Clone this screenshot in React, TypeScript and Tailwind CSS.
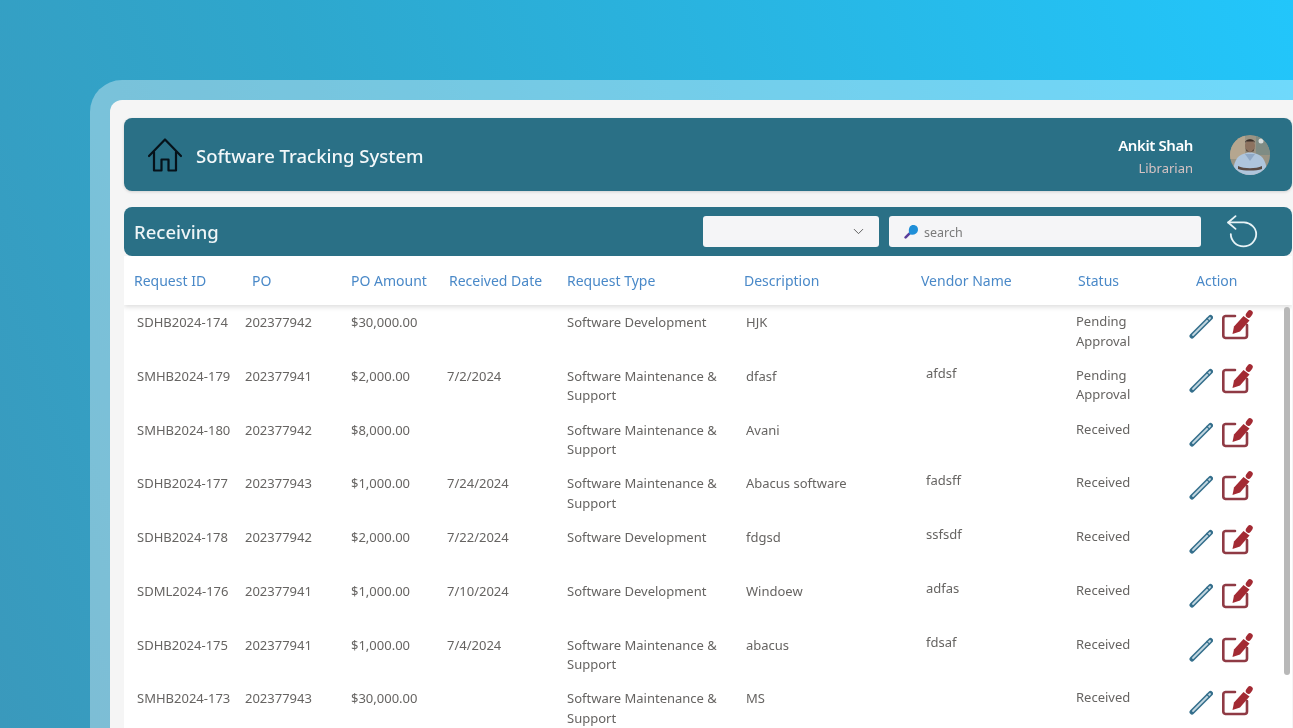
import React from "react";
import { ChevronDown } from "lucide-react";

const font = "font-['Noto_Sans','Open_Sans',sans-serif]";
const cols = "grid grid-cols-[108px_106px_96px_122px_179px_180px_156px_111px_1fr]";

type Row = { id: string; po: string; amt: string; date: string; type: string; desc: string; vendor: string; status: string };
const rows: Row[] = [
  { id: "SDHB2024-174", po: "202377942", amt: "$30,000.00", date: "", type: "Software Development", desc: "HJK", vendor: "", status: "Pending Approval" },
  { id: "SMHB2024-179", po: "202377941", amt: "$2,000.00", date: "7/2/2024", type: "Software Maintenance & Support", desc: "dfasf", vendor: "afdsf", status: "Pending Approval" },
  { id: "SMHB2024-180", po: "202377942", amt: "$8,000.00", date: "", type: "Software Maintenance & Support", desc: "Avani", vendor: "", status: "Received" },
  { id: "SDHB2024-177", po: "202377943", amt: "$1,000.00", date: "7/24/2024", type: "Software Maintenance & Support", desc: "Abacus software", vendor: "fadsff", status: "Received" },
  { id: "SDHB2024-178", po: "202377942", amt: "$2,000.00", date: "7/22/2024", type: "Software Development", desc: "fdgsd", vendor: "ssfsdf", status: "Received" },
  { id: "SDML2024-176", po: "202377941", amt: "$1,000.00", date: "7/10/2024", type: "Software Development", desc: "Windoew", vendor: "adfas", status: "Received" },
  { id: "SDHB2024-175", po: "202377941", amt: "$1,000.00", date: "7/4/2024", type: "Software Maintenance & Support", desc: "abacus", vendor: "fdsaf", status: "Received" },
  { id: "SMHB2024-173", po: "202377943", amt: "$30,000.00", date: "", type: "Software Maintenance & Support", desc: "MS", vendor: "", status: "Received" },
];

const heads: [string, string][] = [
  ["Request ID", "pl-[10px]"],
  ["PO", "pl-[20px]"],
  ["PO Amount", "pl-[13px]"],
  ["Received Date", "pl-[15px]"],
  ["Request Type", "pl-[11px]"],
  ["Description", "pl-[9px]"],
  ["Vendor Name", "pl-[6px]"],
  ["Status", "pl-[7px]"],
  ["Action", "pl-[14px]"],
];

function HomeIcon() {
  return (
    <svg width="36" height="36" viewBox="0 0 36 36" fill="none" stroke="#06121a" strokeWidth="2.2" strokeLinejoin="round" strokeLinecap="round">
      <path d="M2 19 18 2.500 34 19" />
      <path d="M7 15v18.500h7.500V22.500h7v11H29V15" />
    </svg>
  );
}

function UndoIcon() {
  return (
    <svg width="35" height="36" viewBox="0 0 33 34" fill="none" stroke="#e8f3f6" strokeWidth="1.7" strokeLinecap="round" strokeLinejoin="round">
      <path d="M9 2 2 8l7 6" />
      <path d="M2 8h15c6.500 .4 11.500 5 11.500 11 0 6.500-5.500 11.500-12 11.500S4.500 25.500 4.500 19" />
    </svg>
  );
}

function KeyIcon() {
  return (
    <svg width="15" height="15" viewBox="0 0 14 14">
      <path d="M5 9 1.500 12.500" stroke="#5b3f9c" strokeWidth="2.400" strokeLinecap="round" />
      <path d="M8.500 1C11.500 1 13.500 3 13 6c-.4 2.400-2.500 4-5.500 4C5.500 10 4.500 9 4.500 6.500 4.500 3 6 1 8.500 1Z" fill="#1f8fd8" />
    </svg>
  );
}

function PencilIcon() {
  return (
    <svg width="24" height="25" viewBox="0 0 24 25" fill="none" strokeLinecap="round">
      <path d="M3 22 21.500 3.500" stroke="#356f8c" strokeWidth="5" />
      <path d="M4 21 21 4" stroke="#c4d8e2" strokeWidth="1.800" />
      <path d="M17.800 4.500 20.500 7.200" stroke="#356f8c" strokeWidth="1.200" />
    </svg>
  );
}

function EditIcon() {
  return (
    <svg width="31" height="31" viewBox="0 0 31 31" fill="none">
      <path d="M13 6H3.500A2.500 2.500 0 0 0 1.300 8.500v17A2.500 2.500 0 0 0 3.500 28h19a2.500 2.500 0 0 0 2.500-2.500V15" stroke="#8f3a44" strokeWidth="2.600" strokeLinecap="round" />
      <path d="M10.500 24 12 16.500 21.500 6l6 4.500L18 21.500Z" fill="#a32a33" />
      <path d="M26.500 5 28 3" stroke="#a32a33" strokeWidth="5.500" strokeLinecap="round" />
    </svg>
  );
}

function Avatar() {
  return (
    <svg width="40" height="40" viewBox="0 0 40 40" className="rounded-full blur-[0.6px]">
      <rect width="40" height="40" fill="#9a9484" />
      <rect x="0" y="0" width="15" height="24" fill="#b5a68f" />
      <rect x="26" y="0" width="14" height="20" fill="#7f8c84" />
      <circle cx="31" cy="6" r="2.500" fill="#d8dedd" />
      <path d="M3 40c0-13 4-19 10-21l7-2 7 2c6 2 10 8 10 21Z" fill="#aec5dc" />
      <path d="M15 19 20 26l5-7" fill="#8fa9c6" />
      <ellipse cx="20" cy="11" rx="5" ry="6.500" fill="#8d7360" />
      <path d="M15 8c0-5 10-5 10 0l-1-1.500h-8Z" fill="#3a2f28" />
      <path d="M15.500 13c2 4.500 7 4.500 9 0l-1 3.500h-7Z" fill="#54453a" />
      <path d="M8 31c6 3 18 3 24 0v3c-6 2-18 2-24 0Z" fill="#5a4a42" />
    </svg>
  );
}

export default function App() {
  return (
    <div className={`${font} h-[728px] w-[1293px] overflow-hidden bg-[linear-gradient(70deg,#3a99bc_0%,#2ea7cd_35%,#22c6fb_100%)] pl-[90px] pt-[80px] blur-[0.35px]`}>
      <div className="h-full rounded-tl-[32px] bg-white/35 pl-[20px] pt-[20px]">
        <div className="relative h-full rounded-tl-[12px] bg-[#f5f5f5] pl-[14px] pr-px pt-[18px]">
          <header className="flex h-[73px] items-center rounded-lg bg-[#2a7086] pl-[23px] pr-[22px] shadow-[0_1px_3px_rgba(0,0,0,0.15)]">
            <HomeIcon />
            <h1 className="ml-[13px] mt-[3px] text-[18.500px] font-medium text-[#f2f7f9]">Software Tracking System</h1>
            <div className="ml-auto mr-[37px] mt-[3px] text-right">
              <div className="text-[15px] font-semibold leading-[19px] tracking-[-0.4px] text-white">Ankit Shah</div>
              <div className="mt-[5px] text-[13px] leading-[17px] text-[#d7c3c3]">Librarian</div>
            </div>
            <Avatar />
          </header>

          <section className="mt-4 flex h-[49px] items-center rounded-lg bg-[#2a7086] pl-[10px] pr-[31px]">
            <h2 className="mt-[1px] text-[18.500px] font-medium text-[#eef5f7]">Receiving</h2>
            <div className="ml-auto flex h-[31px] w-[176px] items-center justify-end rounded-[3px] bg-[#f5f5f7] pr-[12px]">
              <ChevronDown size={17} strokeWidth={1.3} color="#555555" />
            </div>
            <div className="ml-[10px] flex h-[31px] w-[312px] items-center gap-[5px] rounded-[3px] bg-[#f5f5f7] pl-[15px]">
              <KeyIcon />
              <span className="mt-[3px] text-[12.500px] text-[#7a7a7a]">search</span>
            </div>
            <div className="ml-[25px]">
              <UndoIcon />
            </div>
          </section>

          <div className="relative h-[472px] overflow-hidden bg-white">
            <div className={`${cols} relative z-10 h-[49px] items-center bg-white text-[14px] text-[#4a89c8] shadow-[0_2px_5px_rgba(0,0,0,0.14)]`}>
              {heads.map(([h, p]) => (
                <div key={h} className={`${p} whitespace-nowrap`}>{h}</div>
              ))}
            </div>
            {rows.map((r) => (
              <div key={r.id} className={`${cols} h-[53.750px] pt-[8px] text-[13px] leading-[19.500px] text-[#666462]`}>
                <div className="pl-[13px] whitespace-nowrap">{r.id}</div>
                <div className="pl-[13px]">{r.po}</div>
                <div className="pl-[13px]">{r.amt}</div>
                <div className="pl-[13px]">{r.date}</div>
                <div className="pl-[11px] pr-[2px]">{r.type}</div>
                <div className="pl-[11px]">{r.desc}</div>
                <div className="-mt-[3px] pl-[11px]">{r.vendor}</div>
                <div className="-mt-[1px] pl-[5px] pr-[30px]">{r.status}</div>
                <div className="-mt-[3px] flex items-start gap-[9px] pl-[7px]">
                  <div className="mt-[4px]"><PencilIcon /></div>
                  <EditIcon />
                </div>
              </div>
            ))}
            <div className="absolute right-[2px] top-[51px] z-20 h-[368px] w-[6px] rounded-full bg-[#b8b8b8]" />
          </div>
        </div>
      </div>
    </div>
  );
}
